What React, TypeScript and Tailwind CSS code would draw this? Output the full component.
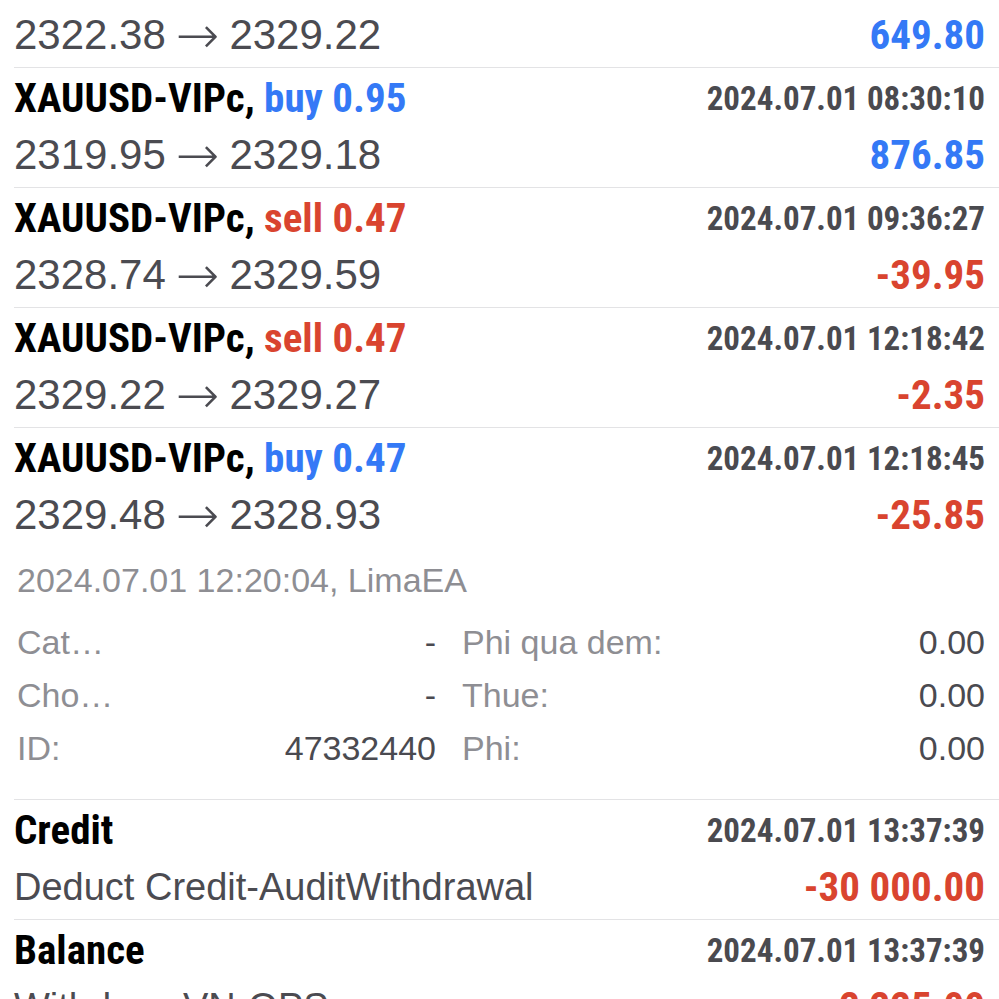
import React from "react";

const NARROW = "font-['Liberation_Sans_Narrow','Roboto_Condensed','DejaVu_Sans_Condensed',sans-serif]";
const SANS = "font-['Liberation_Sans',Arial,sans-serif]";

type Trade = {
  side: "buy" | "sell";
  vol: string;
  date: string;
  open: string;
  close: string;
  profit: string;
};

const trades: Trade[] = [
  { side: "buy", vol: "0.95", date: "2024.07.01 08:10:22", open: "2322.38", close: "2329.22", profit: "649.80" },
  { side: "buy", vol: "0.95", date: "2024.07.01 08:30:10", open: "2319.95", close: "2329.18", profit: "876.85" },
  { side: "sell", vol: "0.47", date: "2024.07.01 09:36:27", open: "2328.74", close: "2329.59", profit: "-39.95" },
  { side: "sell", vol: "0.47", date: "2024.07.01 12:18:42", open: "2329.22", close: "2329.27", profit: "-2.35" },
];

function TitleLine({ left, right }: { left: React.ReactNode; right: string }) {
  return (
    <div className="flex h-[58px] items-center justify-between pr-[14px]">
      <div className={`${NARROW} whitespace-nowrap text-[41px] font-bold leading-none text-black`}>{left}</div>
      <div className={`${NARROW} whitespace-nowrap text-[33px] font-bold leading-none text-[#4a4a4f]`}>{right}</div>
    </div>
  );
}

function Amount({ value }: { value: string }) {
  const red = value.startsWith("-");
  return (
    <div
      className={`${NARROW} whitespace-nowrap text-[41px] font-bold leading-none ${red ? "text-[#d9442f]" : "text-[#3479f6]"}`}
    >
      {value}
    </div>
  );
}

function PriceLine({ open, close, profit }: { open: string; close: string; profit: string }) {
  return (
    <div className="flex h-[56px] items-center justify-between pr-[14px]">
      <div className={`${SANS} flex items-center whitespace-nowrap text-[42px] leading-none text-[#4b4b51]`}>
        <span>{open}</span>
        <span className="mx-[10px] font-['DejaVu_Sans',sans-serif] text-[52px] font-light leading-none">→</span>
        <span>{close}</span>
      </div>
      <Amount value={profit} />
    </div>
  );
}

function TextLine({ text, amount }: { text: string; amount: string }) {
  return (
    <div className="flex h-[56px] items-center justify-between pr-[14px]">
      <div className={`${SANS} whitespace-nowrap text-[38px] leading-none text-[#4b4b51]`}>{text}</div>
      <Amount value={amount} />
    </div>
  );
}

function SideLabel({ side, vol }: { side: "buy" | "sell"; vol: string }) {
  return (
    <span className={side === "buy" ? "text-[#3479f6]" : "text-[#d9442f]"}>
      {side} {vol}
    </span>
  );
}

function TradeRow({ t }: { t: Trade }) {
  return (
    <div className="ml-[14px] flex h-[120px] flex-col border-b border-[#e3e3e5] pt-[1px]">
      <TitleLine
        left={
          <>
            XAUUSD-VIPc, <SideLabel side={t.side} vol={t.vol} />
          </>
        }
        right={t.date}
      />
      <PriceLine open={t.open} close={t.close} profit={t.profit} />
    </div>
  );
}

function DetailCell({ label, value }: { label: string; value: string }) {
  return (
    <div className="flex h-[53px] items-center justify-between">
      <span className={`${SANS} text-[34px] leading-none text-[#8e8e93]`}>{label}</span>
      <span className={`${SANS} text-[34px] leading-none text-[#4a4a50]`}>{value}</span>
    </div>
  );
}

function ExpandedRow() {
  return (
    <div className="ml-[14px] flex flex-col border-b border-[#e3e3e5] pt-[1px] pb-[25px]">
      <TitleLine
        left={
          <>
            XAUUSD-VIPc, <SideLabel side="buy" vol="0.47" />
          </>
        }
        right="2024.07.01 12:18:45"
      />
      <PriceLine open="2329.48" close="2328.93" profit="-25.85" />
      <div className={`${SANS} mt-[12px] flex h-[50px] items-center pl-[3px] text-[34px] leading-none text-[#8e8e93]`}>
        2024.07.01 12:20:04, LimaEA
      </div>
      <div className="mt-[10px] grid grid-cols-[419px_1fr] gap-x-[26px] pl-[3px] pr-[14px]">
        <DetailCell label="Cat…" value="-" />
        <DetailCell label="Phi qua dem:" value="0.00" />
        <DetailCell label="Cho…" value="-" />
        <DetailCell label="Thue:" value="0.00" />
        <DetailCell label="ID:" value="47332440" />
        <DetailCell label="Phi:" value="0.00" />
      </div>
    </div>
  );
}

function SimpleRow({ title, date, desc, amount }: { title: string; date: string; desc: string; amount: string }) {
  return (
    <div className="ml-[14px] flex h-[120px] flex-col border-b border-[#e3e3e5] pt-[1px]">
      <TitleLine left={title} right={date} />
      <TextLine text={desc} amount={amount} />
    </div>
  );
}

export default function App() {
  return (
    <div className="h-[999px] w-[999px] overflow-hidden bg-white">
      <div className="-mt-[52px] flex flex-col">
        {trades.map((t, i) => (
          <TradeRow key={i} t={t} />
        ))}
        <ExpandedRow />
        <SimpleRow title="Credit" date="2024.07.01 13:37:39" desc="Deduct Credit-AuditWithdrawal" amount="-30 000.00" />
        <SimpleRow title="Balance" date="2024.07.01 13:37:39" desc="Withdraw VN-OPS" amount="-2 225.00" />
      </div>
    </div>
  );
}
